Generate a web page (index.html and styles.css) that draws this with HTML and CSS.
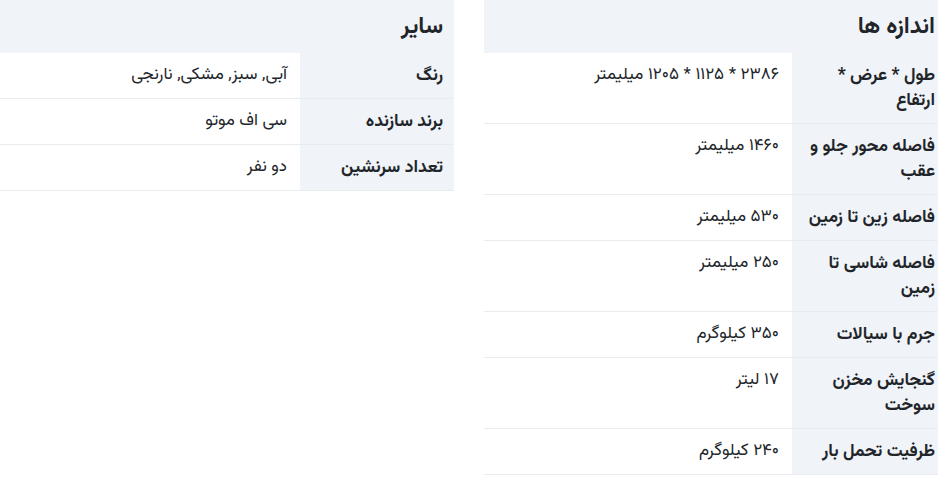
FILE: index.html
```html
<!DOCTYPE html>
<html lang="fa" dir="rtl">
<head>
<meta charset="utf-8">
<link rel="stylesheet" href="styles.css">
</head>
<body>
<div class="specs">
  <table class="spec-table">
    <colgroup><col class="col-label"><col></colgroup>
    <thead><tr><th colspan="2" class="title">اندازه ها</th></tr></thead>
    <tbody>
      <tr><th>طول * عرض * ارتفاع</th><td>۲۳۸۶ * ۱۱۲۵ * ۱۲۰۵ میلیمتر</td></tr>
      <tr><th>فاصله محور جلو و عقب</th><td>۱۴۶۰ میلیمتر</td></tr>
      <tr><th>فاصله زین تا زمین</th><td>۵۳۰ میلیمتر</td></tr>
      <tr><th>فاصله شاسی تا زمین</th><td>۲۵۰ میلیمتر</td></tr>
      <tr><th>جرم با سیالات</th><td>۳۵۰ کیلوگرم</td></tr>
      <tr><th>گنجایش مخزن سوخت</th><td>۱۷ لیتر</td></tr>
      <tr><th>ظرفیت تحمل بار</th><td>۲۴۰ کیلوگرم</td></tr>
    </tbody>
  </table>
  <table class="spec-table">
    <colgroup><col class="col-label"><col></colgroup>
    <thead><tr><th colspan="2" class="title">سایر</th></tr></thead>
    <tbody>
      <tr><th>رنگ</th><td>آبی, سبز, مشکی, نارنجی</td></tr>
      <tr><th>برند سازنده</th><td>سی اف موتو</td></tr>
      <tr><th>تعداد سرنشین</th><td>دو نفر</td></tr>
    </tbody>
  </table>
</div>
</body>
</html>
```
FILE: styles.css
```css
html, body {
  margin: 0;
  padding: 0;
  background: #ffffff;
  overflow: hidden;
}
body {
  font-family: "Vazirmatn", "Noto Sans Arabic", "DejaVu Sans", sans-serif;
  color: #212529;
}
.specs {
  display: flex;
  align-items: flex-start;
  gap: 30px;
  width: 954px;
  margin-right: -8px;
}
.spec-table {
  width: 462px;
  border-collapse: collapse;
  table-layout: fixed;
}
.col-label {
  width: 154px;
}
.spec-table .title {
  background: #f0f3f8;
  height: 53px;
  padding: 0 11px;
  font-size: 23px;
  font-weight: 700;
  text-align: right;
  vertical-align: middle;
}
.spec-table tbody th {
  background: #f0f3f8;
  padding: 10px 11px 10px 6px;
  font-size: 17.5px;
  font-weight: 700;
  line-height: 25px;
  text-align: right;
  vertical-align: top;
  border-bottom: 1px solid #e9ecef;
}
.spec-table td {
  padding: 10px 13px;
  font-size: 17px;
  line-height: 25px;
  text-align: right;
  vertical-align: top;
  border-bottom: 1px solid #e9ecef;
}
```
